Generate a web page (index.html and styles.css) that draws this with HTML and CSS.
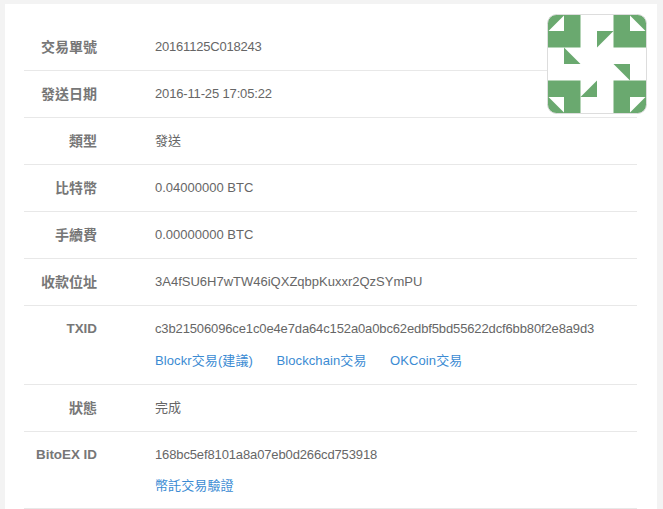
FILE: index.html
```html
<!DOCTYPE html>
<html lang="zh-Hant">
<head>
<meta charset="utf-8">
<title>交易單號</title>
<link rel="stylesheet" href="styles.css">
</head>
<body>
<main class="card">
  <svg class="avatar" viewBox="-0.5 -0.5 100 100" aria-hidden="true">
    <rect x="0" y="0" width="99" height="99" rx="9" fill="#fff"/>
    <g fill="#6aa96f">
      <path d="M9 0H33V33H0V9A9 9 0 0 1 9 0Z"/>
      <path d="M66 0H90A9 9 0 0 1 99 9V33H66Z"/>
      <path d="M0 66H33V99H9A9 9 0 0 1 0 90Z"/>
      <path d="M66 66H99V90A9 9 0 0 1 90 99H66Z"/>
      <path d="M49.5 16.5H66L49.5 33Z"/>
      <path d="M16.5 33L33 49.5H16.5Z"/>
      <path d="M66 49.5H82.5V66Z"/>
      <path d="M49.5 66V82.5H33Z"/>
    </g>
    <g fill="#fff">
      <path d="M16.5 1V16.5H1Z"/>
      <path d="M82.5 1V16.5H98Z"/>
      <path d="M1 82.5H16.5V98Z"/>
      <path d="M82.5 82.5H98L82.5 98Z"/>
    </g>
    <rect x="0" y="0" width="99" height="99" rx="9" fill="none" stroke="#ddd" stroke-width="1"/>
  </svg>
  <dl class="rows">
    <div class="row"><dt class="zh">交易單號</dt><dd class="digits">20161125C018243</dd></div>
    <div class="row"><dt class="zh">發送日期</dt><dd class="digits date">2016-11-25 17:05:22</dd></div>
    <div class="row"><dt class="zh">類型</dt><dd>發送</dd></div>
    <div class="row"><dt class="zh">比特幣</dt><dd>0.04000000 BTC</dd></div>
    <div class="row"><dt class="zh">手續費</dt><dd>0.00000000 BTC</dd></div>
    <div class="row"><dt class="zh">收款位址</dt><dd>3A4fSU6H7wTW46iQXZqbpKuxxr2QzSYmPU</dd></div>
    <div class="row tall txid"><dt>TXID</dt><dd>
      <div class="hash">c3b21506096ce1c0e4e7da64c152a0a0bc62edbf5bd55622dcf6bb80f2e8a9d3</div>
      <div class="links"><a href="#">Blockr交易(建議)</a><a href="#">Blockchain交易</a><a href="#">OKCoin交易</a></div>
    </dd></div>
    <div class="row"><dt class="zh">狀態</dt><dd>完成</dd></div>
    <div class="row tall bitoex"><dt>BitoEX ID</dt><dd>
      <div class="hash">168bc5ef8101a8a07eb0d266cd753918</div>
      <div class="links"><a href="#">幣託交易驗證</a></div>
    </dd></div>
  </dl>
</main>
</body>
</html>
```
FILE: styles.css
```css
html, body { margin: 0; height: 509px; overflow: hidden; }
body {
  background: #f3f3f3;
  font-family: "Liberation Sans", "Noto Sans CJK TC", sans-serif;
  font-size: 13px;
  color: #666;
}
.card {
  position: relative;
  height: 505px;
  overflow: hidden;
  margin: 4px 6px 0 5px;
  padding: 20px 20px 0 19px;
  box-sizing: border-box;
  background: #fff;
}
.avatar { position: absolute; left: 542px; top: 10px; width: 100px; height: 100px; }
.rows { margin: 0; }
.row {
  display: flex;
  align-items: center;
  height: 46px;
  border-bottom: 1px solid #e8e8e8;
}
.row.tall { align-items: flex-start; height: auto; }
.txid { padding: 15px 0; }
.bitoex { padding: 15px 0 14px; }
dt { width: 73px; text-align: right; font-weight: bold; font-size: 13.4px; color: #777; flex: none; line-height: 16px; }
dt.zh { font-size: 14px; }
dd { margin: 0 0 0 58px; line-height: 16px; }
.digits { letter-spacing: -0.2px; }
.date { letter-spacing: -0.15px; }
.hash { letter-spacing: -0.13px; }
.links { margin-top: 16px; display: flex; gap: 23.5px; letter-spacing: 0.1px; }
.bitoex .links { margin-top: 15px; }
a { color: #3b8bd3; text-decoration: none; }
```
